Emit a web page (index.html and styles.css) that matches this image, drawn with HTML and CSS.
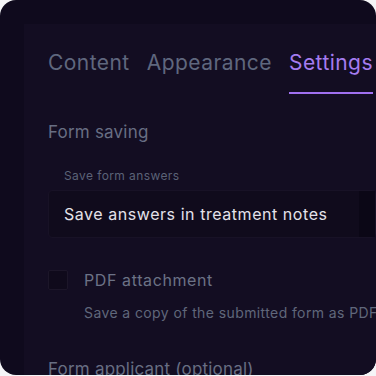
FILE: index.html
```html
<!DOCTYPE html>
<html>
<head>
<meta charset="utf-8">
<link rel="stylesheet" href="styles.css">
</head>
<body>
<div class="frame">
  <div class="panel">
    <nav class="tabs">
      <span class="tab">Content</span>
      <span class="tab">Appearance</span>
      <span class="tab active">Settings</span>
    </nav>
    <h2 class="section">Form saving</h2>
    <div class="field">
      <label class="label">Save form answers</label>
      <div class="select">
        <span class="value">Save answers in treatment notes</span>
        <span class="btn"></span>
      </div>
    </div>
    <div class="check-row">
      <span class="box"></span>
      <div class="check-text">
        <div class="check-title">PDF attachment</div>
        <div class="check-desc">Save a copy of the submitted form as PDF</div>
      </div>
    </div>
    <h2 class="section applicant">Form applicant (optional)</h2>
  </div>
</div>
</body>
</html>
```
FILE: styles.css
```css
* { box-sizing: border-box; }
html, body { margin: 0; padding: 0; }
body {
  background: #f5f5f7;
  font-family: Inter, "Noto Sans", sans-serif;
  width: 376px;
  height: 376px;
  overflow: hidden;
}
.frame {
  height: 375px;
  border-radius: 16px;
  background: #0f0a1d;
  padding: 24px 0 0 24px;
  overflow: hidden;
}
.panel {
  height: 100%;
  background: #130d22;
  padding: 24px 0 0 24px;
  overflow: hidden;
  white-space: nowrap;
}
.tabs {
  display: flex;
  gap: 17px;
  height: 46px;
}
.tab {
  font-size: 21px;
  line-height: 30px;
  letter-spacing: 0.45px;
  color: #5f677e;
  height: 46px;
}
.tab.active {
  color: #a57cf0;
  border-bottom: 2px solid #a070f0;
}
.section {
  margin: 0;
  margin-top: 28px;
  font-size: 17px;
  font-weight: 400;
  letter-spacing: 0.2px;
  line-height: 20px;
  color: #686e83;
}
.field {
  margin-top: 26px;
}
.label {
  display: block;
  padding-left: 16px;
  font-size: 12px;
  letter-spacing: 0.4px;
  line-height: 16px;
  color: #5b6277;
}
.select {
  margin-top: 6px;
  height: 48px;
  display: flex;
  align-items: center;
  background: #100b1c;
  border: 1px solid #181226;
  border-radius: 4px;
  padding-left: 15px;
}
.value {
  flex: 1;
  font-size: 16px;
  letter-spacing: 0.55px;
  color: #e4e2ea;
}
.btn {
  width: 16px;
  height: 46px;
  background: #0b0716;
}
.check-row {
  margin-top: 30px;
  display: flex;
  gap: 16px;
}
.box {
  width: 20px;
  height: 20px;
  border: 1px solid #1c1629;
  background: #0f0a1b;
  border-radius: 2px;
  flex: none;
  margin-top: 2px;
}
.check-title {
  font-size: 16px;
  letter-spacing: 0.6px;
  line-height: 20px;
  color: #6c7286;
  margin-top: 2px;
}
.check-desc {
  margin-top: 13px;
  font-size: 14px;
  letter-spacing: 0.4px;
  line-height: 20px;
  color: #60677b;
}
.applicant {
  margin-top: 36px;
}
```
